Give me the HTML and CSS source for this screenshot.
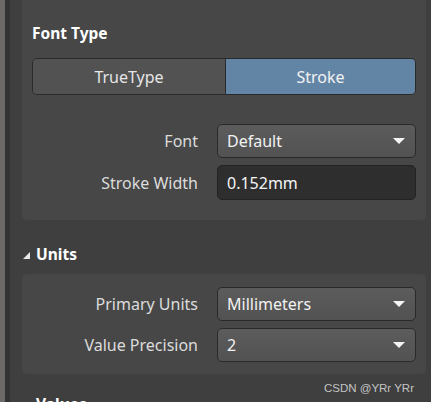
FILE: index.html
```html
<!DOCTYPE html>
<html>
<head>
<meta charset="utf-8">
<link rel="stylesheet" href="styles.css">
</head>
<body>
<div class="app">
  <div class="edge-light"></div>
  <div class="edge-dark"></div>
  <div class="main">
    <div class="card card-first">
      <div class="card-title">Font Type</div>
      <div class="segmented">
        <div class="seg">TrueType</div>
        <div class="seg seg-active">Stroke</div>
      </div>
      <div class="form form-first">
        <div class="label">Font</div>
        <div class="select"><span>Default</span><span class="caret"></span></div>
        <div class="label">Stroke Width</div>
        <div class="input">0.152mm</div>
      </div>
    </div>

    <div class="section-head"><span class="tri"></span><span>Units</span></div>
    <div class="card">
      <div class="form">
        <div class="label">Primary Units</div>
        <div class="select"><span>Millimeters</span><span class="caret"></span></div>
        <div class="label">Value Precision</div>
        <div class="select"><span>2</span><span class="caret"></span></div>
      </div>
    </div>
    <div class="watermark">CSDN @YRr YRr</div>
    <div class="section-cut">Values</div>
  </div>
</div>
</body>
</html>
```

FILE: styles.css
```css
html, body {
  margin: 0;
  padding: 0;
  width: 431px;
  height: 402px;
  overflow: hidden;
  background: #3e3e3e;
  font-family: "Noto Sans", "Open Sans", sans-serif;
}
.app {
  display: flex;
  height: 402px;
}
.edge-light {
  width: 5px;
  background: #6d6967;
  flex: none;
}
.edge-dark {
  width: 5px;
  background: #333333;
  flex: none;
}
.main {
  flex: 1;
  background: #3f3f3f;
  padding: 0 5px 0 12px;
  display: flex;
  flex-direction: column;
}
.main > * {
  flex: none;
}
.card {
  background: #474747;
  border-radius: 5px;
  padding: 13px 10px 12px 10px;
}
.card-first {
  border-radius: 0 0 5px 5px;
  padding: 22px 10px 20px 10px;
}
.card-title {
  color: #ffffff;
  font-weight: 700;
  font-size: 15.5px;
  line-height: 22px;
  height: 22px;
}
.segmented {
  margin-top: 14px;
  height: 35px;
  border: 1px solid #2a2a2a;
  border-radius: 5px;
  display: flex;
  overflow: hidden;
}
.seg {
  flex: 0 0 192px;
  display: flex;
  align-items: center;
  justify-content: center;
  background: #525252;
  color: #e6e6e6;
  font-size: 16px;
  border-right: 1px solid #2a2a2a;
}
.seg-active {
  flex: 1;
  background: #6385a5;
  color: #f2f2f2;
  border-right: none;
}
.form {
  display: grid;
  grid-template-columns: 1fr 199px;
  column-gap: 19px;
  row-gap: 7px;
  align-items: center;
}
.form-first {
  margin-top: 29px;
}
.label {
  text-align: right;
  color: #dcdcdc;
  font-size: 16px;
}
.select {
  box-sizing: border-box;
  height: 34px;
  border: 1px solid #2a2a2a;
  border-radius: 5px;
  background: linear-gradient(#5c5c5c, #525252);
  color: #f2f2f2;
  font-size: 16px;
  display: flex;
  align-items: center;
  justify-content: space-between;
  padding: 0 10px 0 9px;
}
.caret {
  width: 0;
  height: 0;
  border-left: 6px solid transparent;
  border-right: 6px solid transparent;
  border-top: 6px solid #f5f5f5;
}
.input {
  box-sizing: border-box;
  height: 35px;
  border: 1px solid #232323;
  border-radius: 5px;
  background: #2e2e2e;
  color: #f5f5f5;
  font-size: 16px;
  display: flex;
  align-items: center;
  padding: 0 9px;
}
.section-head {
  box-sizing: border-box;
  display: flex;
  align-items: center;
  gap: 6px;
  color: #ffffff;
  font-weight: 700;
  font-size: 15.5px;
  line-height: 20px;
  height: 54px;
  padding: 24px 0 10px 1px;
}
.tri {
  width: 0;
  height: 0;
  border-left: 7px solid transparent;
  border-bottom: 7px solid #e8e8e8;
  margin-top: 2px;
}
.watermark {
  text-align: right;
  color: #c4c4c4;
  font-family: "Liberation Sans", Arial, sans-serif;
  font-size: 11.5px;
  line-height: 12px;
  padding: 8px 12px 0 0;
  height: 12px;
}
.section-cut {
  color: #ffffff;
  font-weight: 700;
  font-size: 15.5px;
  line-height: 21px;
  padding-left: 14px;
}
```
